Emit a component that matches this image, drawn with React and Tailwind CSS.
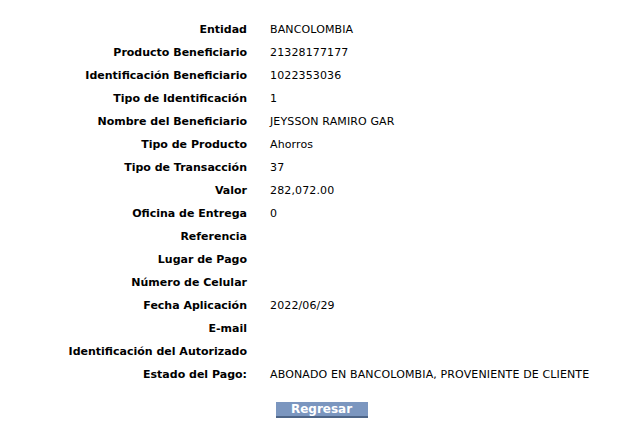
const rows = [
  ["Entidad", "BANCOLOMBIA"],
  ["Producto Beneficiario", "21328177177"],
  ["Identificación Beneficiario", "1022353036"],
  ["Tipo de Identificación", "1"],
  ["Nombre del Beneficiario", "JEYSSON RAMIRO GAR"],
  ["Tipo de Producto", "Ahorros"],
  ["Tipo de Transacción", "37"],
  ["Valor", "282,072.00"],
  ["Oficina de Entrega", "0"],
  ["Referencia", ""],
  ["Lugar de Pago", ""],
  ["Número de Celular", ""],
  ["Fecha Aplicación", "2022/06/29"],
  ["E-mail", ""],
  ["Identificación del Autorizado", ""],
  ["Estado del Pago:", "ABONADO EN BANCOLOMBIA, PROVENIENTE DE CLIENTE"],
];

export default function App() {
  return (
    <div className="w-[641px] h-[443px] bg-white pt-[19px] text-black font-['DejaVu_Sans',Verdana,sans-serif]">
      <div className="flex flex-col">
        {rows.map(([label, value]) => (
          <div key={label} className="flex h-[23px] items-center">
            <div className="w-[247px] shrink-0 text-right text-[11px] font-bold">
              {label}
            </div>
            <div className="pl-[23px] text-[11px] tracking-[0.13px] whitespace-nowrap">{value}</div>
          </div>
        ))}
      </div>
      <div className="flex justify-center pt-[15px] pl-[2px]">
        <button className="w-[92px] h-[16px] bg-[#7b96bf] border-b-2 border-[#4e6587] text-white text-[12px] font-bold leading-none">
          Regresar
        </button>
      </div>
    </div>
  );
}
